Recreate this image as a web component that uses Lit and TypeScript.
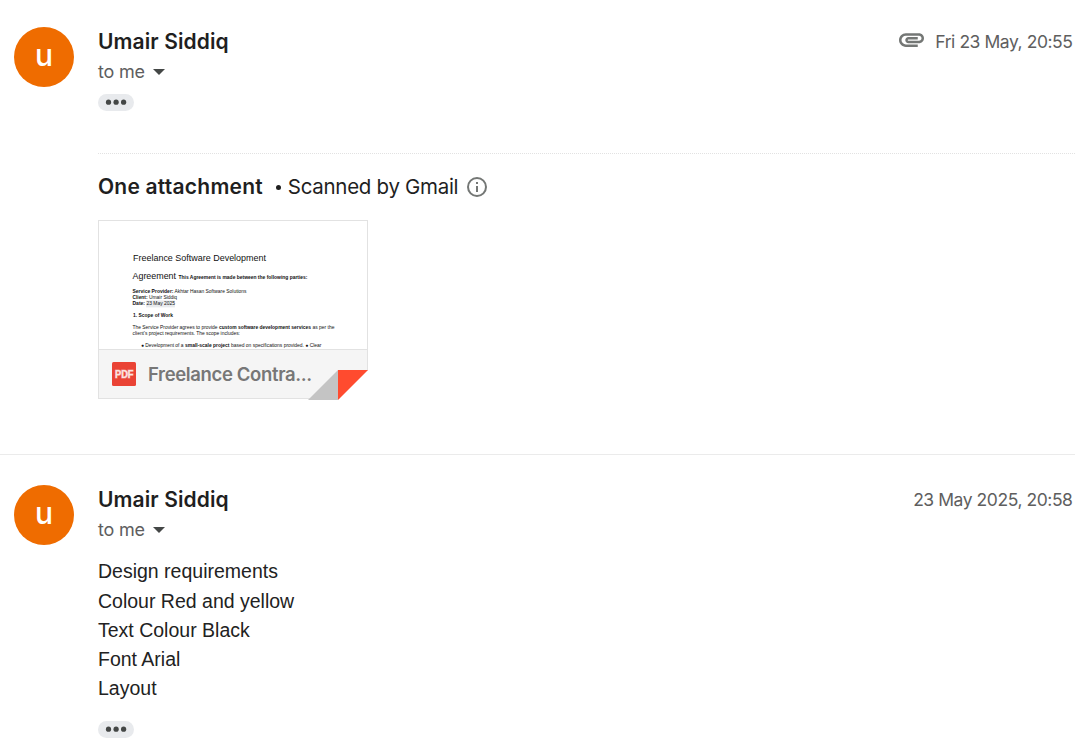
import { LitElement, html, svg, css, nothing } from "lit";
import { customElement, property } from "lit/decorators.js";

@customElement("sender-avatar")
class SenderAvatar extends LitElement {
  @property() letter = "";
  static styles = css`
    :host {
      display: flex;
      align-items: center;
      justify-content: center;
      width: 60px;
      height: 60px;
      border-radius: 50%;
      background: #ef6c00;
      color: #fff;
      font: 500 30px/56px Inter, "Open Sans", sans-serif;
    }
    span { display: block; height: 60px; }
  `;
  render() {
    return html`<span>${this.letter}</span>`;
  }
}

@customElement("more-chip")
class MoreChip extends LitElement {
  static styles = css`
    :host { display: block; width: 36px; height: 17px; }
    svg { display: block; }
  `;
  render() {
    return html`<svg width="36" height="17" viewBox="0 0 36 17">
      <rect width="36" height="17" rx="8.5" fill="#e8eaed" />
      <g fill="#444746">
        <circle cx="10.5" cy="8.2" r="2.6" />
        <circle cx="18.1" cy="8.2" r="2.6" />
        <circle cx="25.6" cy="8.2" r="2.6" />
      </g>
    </svg>`;
  }
}

@customElement("mail-message")
class MailMessage extends LitElement {
  @property() sender = "";
  @property() date = "";
  @property({ type: Boolean }) clip = false;
  static styles = css`
    :host {
      display: grid;
      grid-template-columns: 60px 1fr;
      column-gap: 24px;
      padding-left: 14px;
      font-family: Inter, "Open Sans", sans-serif;
    }
    .head { display: flex; justify-content: space-between; height: 30px; padding-right: 2.5px; }
    .name { font-size: 21px; font-weight: 600; line-height: 30px; color: #1f1f1f; letter-spacing: 0.1px; white-space: nowrap; }
    .when { display: flex; gap: 11px; font-size: 17.5px; line-height: 30px; color: #5e5e5e; letter-spacing: -0.44px; white-space: nowrap; }
    .when svg { margin-top: 6px; }
    .to { display: flex; align-items: center; gap: 8px; height: 30px; font-size: 18px; line-height: 30px; color: #5e5e5e; letter-spacing: -0.2px; }
  `;
  render() {
    return html`
      <sender-avatar letter="u"></sender-avatar>
      <div>
        <div class="head">
          <div class="name">${this.sender}</div>
          <div class="when">
            ${this.clip
              ? html`<svg width="25" height="14" viewBox="2 7 20 11" fill="#747775">
                  <path d="M2 12.5C2 9.46 4.46 7 7.5 7H18c2.21 0 4 1.79 4 4s-1.79 4-4 4H9.5C8.12 15 7 13.88 7 12.5S8.12 10 9.5 10H17v2H9.41c-.55 0-.55 1 0 1H18c1.1 0 2-.9 2-2s-.9-2-2-2H7.5C5.57 9 4 10.57 4 12.5S5.57 16 7.5 16H17v2H7.5C4.46 18 2 15.54 2 12.5z" />
                </svg>`
              : nothing}
            <span class="date">${this.date}</span>
          </div>
        </div>
        <div class="to">
          <span class="me">to me</span>
          <svg width="12" height="6" viewBox="0 0 12 6"><path d="M0 0h12l-6 6z" fill="#444746" /></svg>
        </div>
        <slot></slot>
      </div>
    `;
  }
}

type Run = [x: number, y: number, size: number, width: number, bold: boolean, text: string];

const PAGE: Run[] = [
  [34, 40.5, 9, 133, false, "Freelance Software Development"],
  [33.5, 58.5, 9, 43.5, false, "Agreement"],
  [79.5, 58.5, 5, 129, true, "This Agreement is made between the following parties:"],
  [33.5, 72.5, 5, 41, true, "Service Provider:"],
  [75.5, 72.5, 5, 72, false, "Akhtar Hasan Software Solutions"],
  [33.5, 78.5, 5, 15, true, "Client:"],
  [50, 78.5, 5, 28, false, "Umair Siddiq"],
  [33.5, 84.8, 5, 12.5, true, "Date:"],
  [47.5, 84.8, 5, 28.5, false, "23 May 2025"],
  [34, 96.5, 5, 40, true, "1. Scope of Work"],
  [33.5, 108.7, 5, 85, false, "The Service Provider agrees to provide"],
  [120, 108.7, 5, 92, true, "custom software development services"],
  [213.5, 108.7, 5, 22, false, "as per the"],
  [33.5, 114.7, 5, 107.5, false, "client's project requirements. The scope includes:"],
  [42, 126.7, 5, 42.5, false, "● Development of a"],
  [86, 126.7, 5, 44.5, true, "small-scale project"],
  [132, 126.7, 5, 90.5, false, "based on specifications provided. ● Clear"],
];

@customElement("pdf-card")
class PdfCard extends LitElement {
  static styles = css`
    :host { display: block; position: relative; width: 270px; height: 179px; box-sizing: border-box; border: 1px solid #e2e2e2; background: #fff; }
    .page { display: block; height: 128px; overflow: hidden; }
    .bar { display: flex; align-items: center; gap: 12px; height: 49px; padding-left: 13px; box-sizing: border-box; border-top: 1px solid #e2e2e2; background: #f5f5f5; }
    .file { font: 600 18.5px/46px Inter, "Open Sans", sans-serif; letter-spacing: -0.36px; color: #777; white-space: nowrap; }
    .fold { position: absolute; right: -1px; bottom: -2px; }
  `;
  render() {
    return html`
      <svg class="page" width="268" height="128" viewBox="0 0.6 268 128" font-family="Liberation Sans, Arial, sans-serif" fill="#111">
        <rect x="47" y="80" width="29" height="7" fill="#e8eaed" />
        ${PAGE.map(
          ([x, y, size, width, bold, text]) => svg`<text x=${x} y=${y} font-size=${size}
            font-weight=${bold ? 700 : 400} textLength=${width} lengthAdjust="spacingAndGlyphs">${text}</text>`
        )}
      </svg>
      <div class="bar">
        <svg width="24" height="24" viewBox="0 0 24 24">
          <rect width="24" height="24" rx="1.5" fill="#ea4335" />
          <text x="3" y="15.8" font-family="Liberation Sans, Arial, sans-serif" font-size="10" font-weight="700"
            fill="#fff" fill-opacity=".8" stroke="#fff" stroke-opacity=".4" stroke-width="1.2" textLength="18.5" lengthAdjust="spacingAndGlyphs">PDF</text>
        </svg>
        <span class="file">Freelance Contra...</span>
      </div>
      <svg class="fold" width="60" height="30" viewBox="0 0 60 30">
        <path d="M30 30h30V0z" fill="#fff" />
        <path d="M0 30 30 0v30z" fill="#c4c4c4" />
        <path d="M30 0h30L30 30z" fill="#ff4b2f" />
      </svg>
    `;
  }
}

@customElement("app-root")
class AppRoot extends LitElement {
  static styles = css`
    :host { display: block; height: 748px; overflow: hidden; background: #fff; font-family: Inter, "Open Sans", sans-serif; color: #1f1f1f; }
    .first { height: 427px; padding-top: 27px; }
    .second { border-top: 1px solid #ebebeb; padding-top: 30px; }
    .chip { margin-top: 7px; }
    .attachments { margin-top: 42px; border-top: 1px dotted #e2e2e2; }
    .title { display: flex; align-items: center; height: 30px; margin: 18px 0; font-size: 21px; line-height: 30px; white-space: nowrap; }
    .count { font-weight: 600; letter-spacing: 0.22px; }
    .scan { font-size: 20.5px; letter-spacing: -0.3px; }
    .dot { width: 5px; height: 5px; border-radius: 50%; background: #1f1f1f; margin: 1px 7px 0 13px; }
    .info { margin-left: 9px; }
    .body { margin-top: 12.3px; font: 19.5px/29.25px "Liberation Sans", Arial, sans-serif; color: #222; }
    .last { margin-top: 17px; }
  `;
  render() {
    return html`
      <mail-message class="first" sender="Umair Siddiq" date="Fri 23 May, 20:55" clip>
        <more-chip class="chip"></more-chip>
        <section class="attachments">
          <div class="title">
            <span class="count">One attachment</span>
            <span class="dot"></span>
            <span class="scan">Scanned by Gmail</span>
            <svg class="info" width="20" height="20" viewBox="0 0 20 20">
              <circle cx="10" cy="10" r="9" fill="none" stroke="#747775" stroke-width="2" />
              <path d="M9 9h2v6H9zM9 5h2v2H9z" fill="#747775" />
            </svg>
          </div>
          <pdf-card></pdf-card>
        </section>
      </mail-message>
      <mail-message class="second" sender="Umair Siddiq" date="23 May 2025, 20:58">
        <div class="body">
          ${["Design requirements", "Colour Red and yellow", "Text Colour Black", "Font Arial", "Layout"].map(
            (line) => html`<div>${line}</div>`
          )}
        </div>
        <more-chip class="last"></more-chip>
      </mail-message>
    `;
  }
}
